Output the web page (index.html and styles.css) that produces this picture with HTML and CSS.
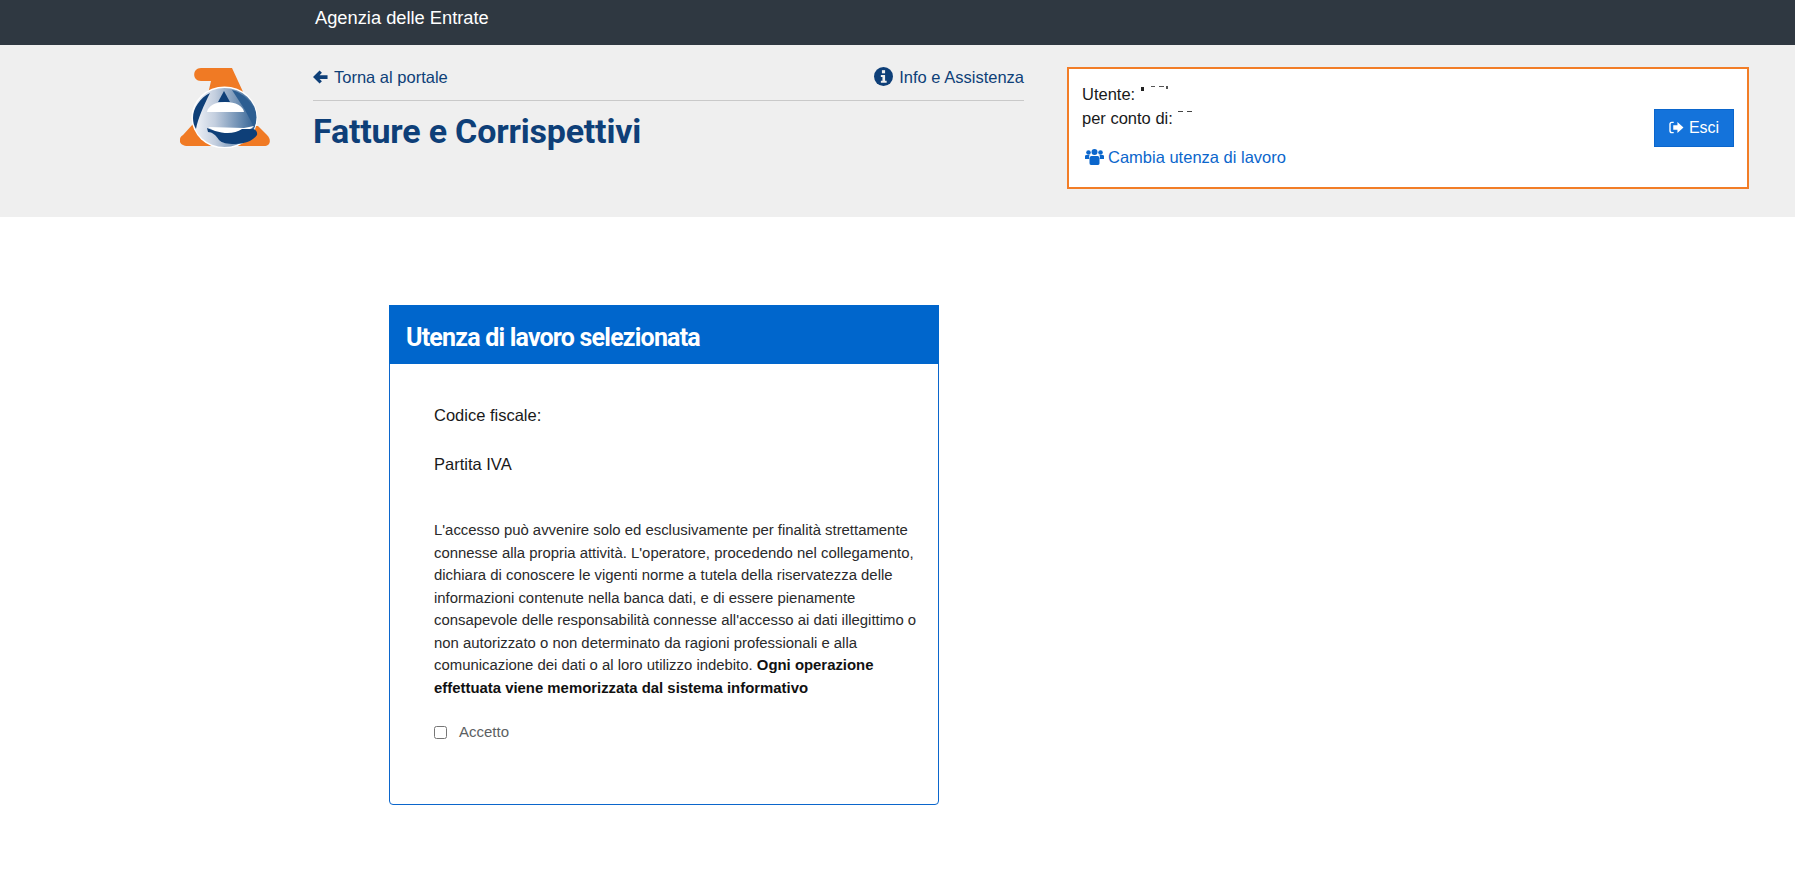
FILE: index.html
```html
<!DOCTYPE html>
<html lang="it">
<head>
<meta charset="utf-8">
<title>Fatture e Corrispettivi</title>
<link rel="stylesheet" href="styles.css">
</head>
<body>
<div class="topbar"><span class="topbar-title">Agenzia delle Entrate</span></div>
<header class="head">
  <svg class="logo" viewBox="0 0 90 80" width="90" height="80">
    <defs>
      <linearGradient id="lg" x1="0" x2="1" y1="0" y2="0">
        <stop offset="0" stop-color="#f4f6fa"/>
        <stop offset="0.35" stop-color="#c4cfdf"/>
        <stop offset="1" stop-color="#2c5e92"/>
      </linearGradient>
    </defs>
    <path fill="#f07a24" d="M21 0H52L64 26H28L31 13H21C12 13 12 0 21 0Z"/>
    <path fill="#f07a24" d="M13 56H22L34 78H8C-2 78-2 70 3 67Z"/>
    <path fill="#f07a24" d="M60 58H78L87 67C92 72 90 78 84 78H58Z"/>
    <ellipse cx="44.500" cy="49.500" rx="33" ry="31" fill="#fff"/>
    <ellipse cx="44.500" cy="49.500" rx="32" ry="29.500" fill="url(#lg)"/>
    <path fill="#0e3f78" d="M30 25C20 30 13 40 13 50C13 54 14 58 16 61C18 50 24 37 30 25Z"/>
    <path fill="#0e3f78" d="M44 23L50 34H38Z"/>
    <path fill="#2c5e92" d="M52 22C66 26 76 38 76 50C76 54 75 57 74 59L65 42Z"/>
    <path fill="#fff" d="M27 44C28 38 35 34 45 34C56 34 63 38 64 44Z"/>
    <path fill="#fff" d="M28 59L64 60L74 58L66 66L40 66Z"/>
    <path fill="#0e3f78" d="M27 60L35 63C45 66 55 66 62 61L70 61C74 60 78 63 77 67C73 73 65 76 55 76C47 76 42 75 39 72C36 67 32 64 28 64Z"/>
  </svg>
  <div class="head-main">
    <div class="nav-row">
      <a class="nav-link">
        <svg class="ico-arrow" viewBox="0 0 16 14" width="15" height="14"><path fill="#0e3f78" d="M0 7L7 0L9.500 2.500L7 5H15.500V9H7L9.500 11.500L7 14Z"/></svg>
        Torna al portale
      </a>
      <a class="nav-link">
        <svg class="ico-info" viewBox="0 0 18 18" width="18" height="18"><circle cx="9" cy="9" r="9" fill="#0e3f78"/><rect x="7.500" y="3" width="3" height="3" fill="#efefef"/><path fill="#efefef" d="M6.500 7.500H10.500V13H12V15H6.500V13H8V9.500H6.500Z"/></svg>
        Info e Assistenza
      </a>
    </div>
    <h1 class="app-title">Fatture e Corrispettivi</h1>
  </div>
  <div class="user-box">
    <div class="user-info">
      <div class="user-line">Utente: <svg class="mask" viewBox="0 0 30 8" width="30" height="8"><rect x="1" y="1" width="3" height="4" fill="#222"/><rect x="11" y="0" width="4" height="1" fill="#555"/><rect x="19" y="0" width="5" height="1" fill="#555"/><rect x="26" y="0" width="2" height="3" fill="#555"/></svg></div>
      <div class="user-line">per conto di: <svg class="mask" viewBox="0 0 20 8" width="20" height="8"><rect x="1" y="1" width="5" height="1" fill="#444"/><rect x="10" y="1" width="5" height="1" fill="#444"/></svg></div>
      <a class="switch-link">
        <svg class="ico-users" viewBox="0 0 19 16" width="19" height="16"><g fill="#0b66cc"><circle cx="3.500" cy="3.500" r="2.300"/><circle cx="15.500" cy="3.500" r="2.300"/><circle cx="9.500" cy="3" r="3"/><path d="M0 7C0 6 1 6 2 6H4.500C4 8 4 9 4.500 10H0Z"/><path d="M19 7C19 6 18 6 17 6H14.500C15 8 15 9 14.500 10H19Z"/><path d="M6.500 7H12.500C14 7 14.500 8.500 14.500 10V14C14.500 15 14 16 13 16H6C5 16 4.500 15 4.500 14V10C4.500 8.500 5 7 6.500 7Z"/></g></svg>
        Cambia utenza di lavoro
      </a>
    </div>
    <button class="exit-btn" type="button">
      <svg class="ico-exit" viewBox="0 0 16 14" width="15" height="13"><path fill="none" stroke="#fff" stroke-width="1.500" d="M5 1.500H3C2 1.500 1 2.500 1 3.500V10.500C1 11.500 2 12.500 3 12.500H5"/><path fill="#fff" d="M4.500 4.500H9V1L15.500 7L9 13V9.500H4.500Z"/></svg>
      Esci
    </button>
  </div>
</header>
<main class="content">
  <section class="card">
    <h2 class="card-title">Utenza di lavoro selezionata</h2>
    <div class="card-body">
      <p class="field">Codice fiscale:</p>
      <p class="field">Partita IVA</p>
      <p class="notice">L'accesso può avvenire solo ed esclusivamente per finalità strettamente connesse alla propria attività. L'operatore, procedendo nel collegamento, dichiara di conoscere le vigenti norme a tutela della riservatezza delle informazioni contenute nella banca dati, e di essere pienamente consapevole delle responsabilità connesse all'accesso ai dati illegittimo o non autorizzato o non determinato da ragioni professionali e alla comunicazione dei dati o al loro utilizzo indebito. <strong>Ogni operazione effettuata viene memorizzata dal sistema informativo</strong></p>
      <label class="accept"><input class="accept-box" type="checkbox"> Accetto</label>
    </div>
  </section>
</main>
</body>
</html>
```

FILE: styles.css
```css
* { box-sizing: border-box; }
html, body { margin: 0; padding: 0; }
body {
  background: #fff;
  color: #19191a;
  font-family: "Liberation Sans", Arial, sans-serif;
  font-size: 16.5px;
  height: 889px;
  overflow: hidden;
}
.topbar {
  height: 45px;
  background: #2f3841;
  padding: 8px 0 0 315px;
  color: #fff;
  font-size: 18.3px;
  line-height: 20px;
}
.head {
  height: 172px;
  background: #efefef;
  display: flex;
  align-items: flex-start;
  padding: 22px 46px 0 180px;
}
.logo { flex: none; margin: 1px 43px 0 0; }
.head-main { width: 711px; flex: none; margin-right: 43px; }
.nav-row {
  display: flex;
  justify-content: space-between;
  align-items: center;
  height: 34px;
  padding-bottom: 14px;
  border-bottom: 1px solid #c9c9c9;
}
.nav-link { color: #0e3f78; display: flex; align-items: center; gap: 6px; line-height: 20px; }
.ico-info { width: 19px; height: 19px; }
.app-title {
  margin: 8px 0 0;
  font-family: Roboto, sans-serif;
  font-size: 34px;
  line-height: 44px;
  font-weight: 700;
  color: #0e3f78;
  letter-spacing: -0.2px;
}
.user-box {
  flex: none;
  width: 682px;
  height: 122px;
  background: #fff;
  border: 2px solid #f27d27;
  display: flex;
  justify-content: space-between;
  align-items: center;
  padding: 0 13px;
}
.user-info { color: #19191a; margin-top: -7px; }
.user-line { line-height: 24px; height: 24px; }
.mask { vertical-align: 6px; }
.switch-link { display: flex; align-items: center; gap: 4px; color: #0b66cc; margin: 17px 0 0 3px; line-height: 20px; }
.exit-btn {
  width: 80px;
  height: 38px;
  background: #1473db;
  border: 1px solid #0b66cc;
  color: #fff;
  font: inherit;
  font-size: 16px;
  padding: 0;
  display: flex;
  align-items: center;
  justify-content: center;
  gap: 5px;
  margin-top: -1px;
}
.content { padding: 88px 0 0 389px; }
.card {
  width: 550px;
  height: 500px;
  border: 1px solid #0b66cc;
  border-radius: 0 0 4px 4px;
}
.card-title {
  margin: -1px -1px 0;
  height: 59px;
  background: #0066cc;
  color: #fff;
  font-family: Roboto, sans-serif;
  font-size: 25px;
  font-weight: 700;
  line-height: 65px;
  padding-left: 17px;
  letter-spacing: -0.8px;
}
.card-body { padding: 41px 14px 0 44px; }
.field { margin: 0 0 29px; line-height: 20px; height: 20px; }
.notice { margin: 45px 0 0; font-size: 14.900px; line-height: 22.500px; color: #2a2a2b; }
.notice strong { color: #111; }
.accept {
  display: flex;
  align-items: center;
  gap: 12px;
  margin-top: 23px;
  font-size: 15px;
  line-height: 20px;
  color: #5c5f63;
}
.accept-box { width: 13px; height: 13px; margin: 0; }
```
